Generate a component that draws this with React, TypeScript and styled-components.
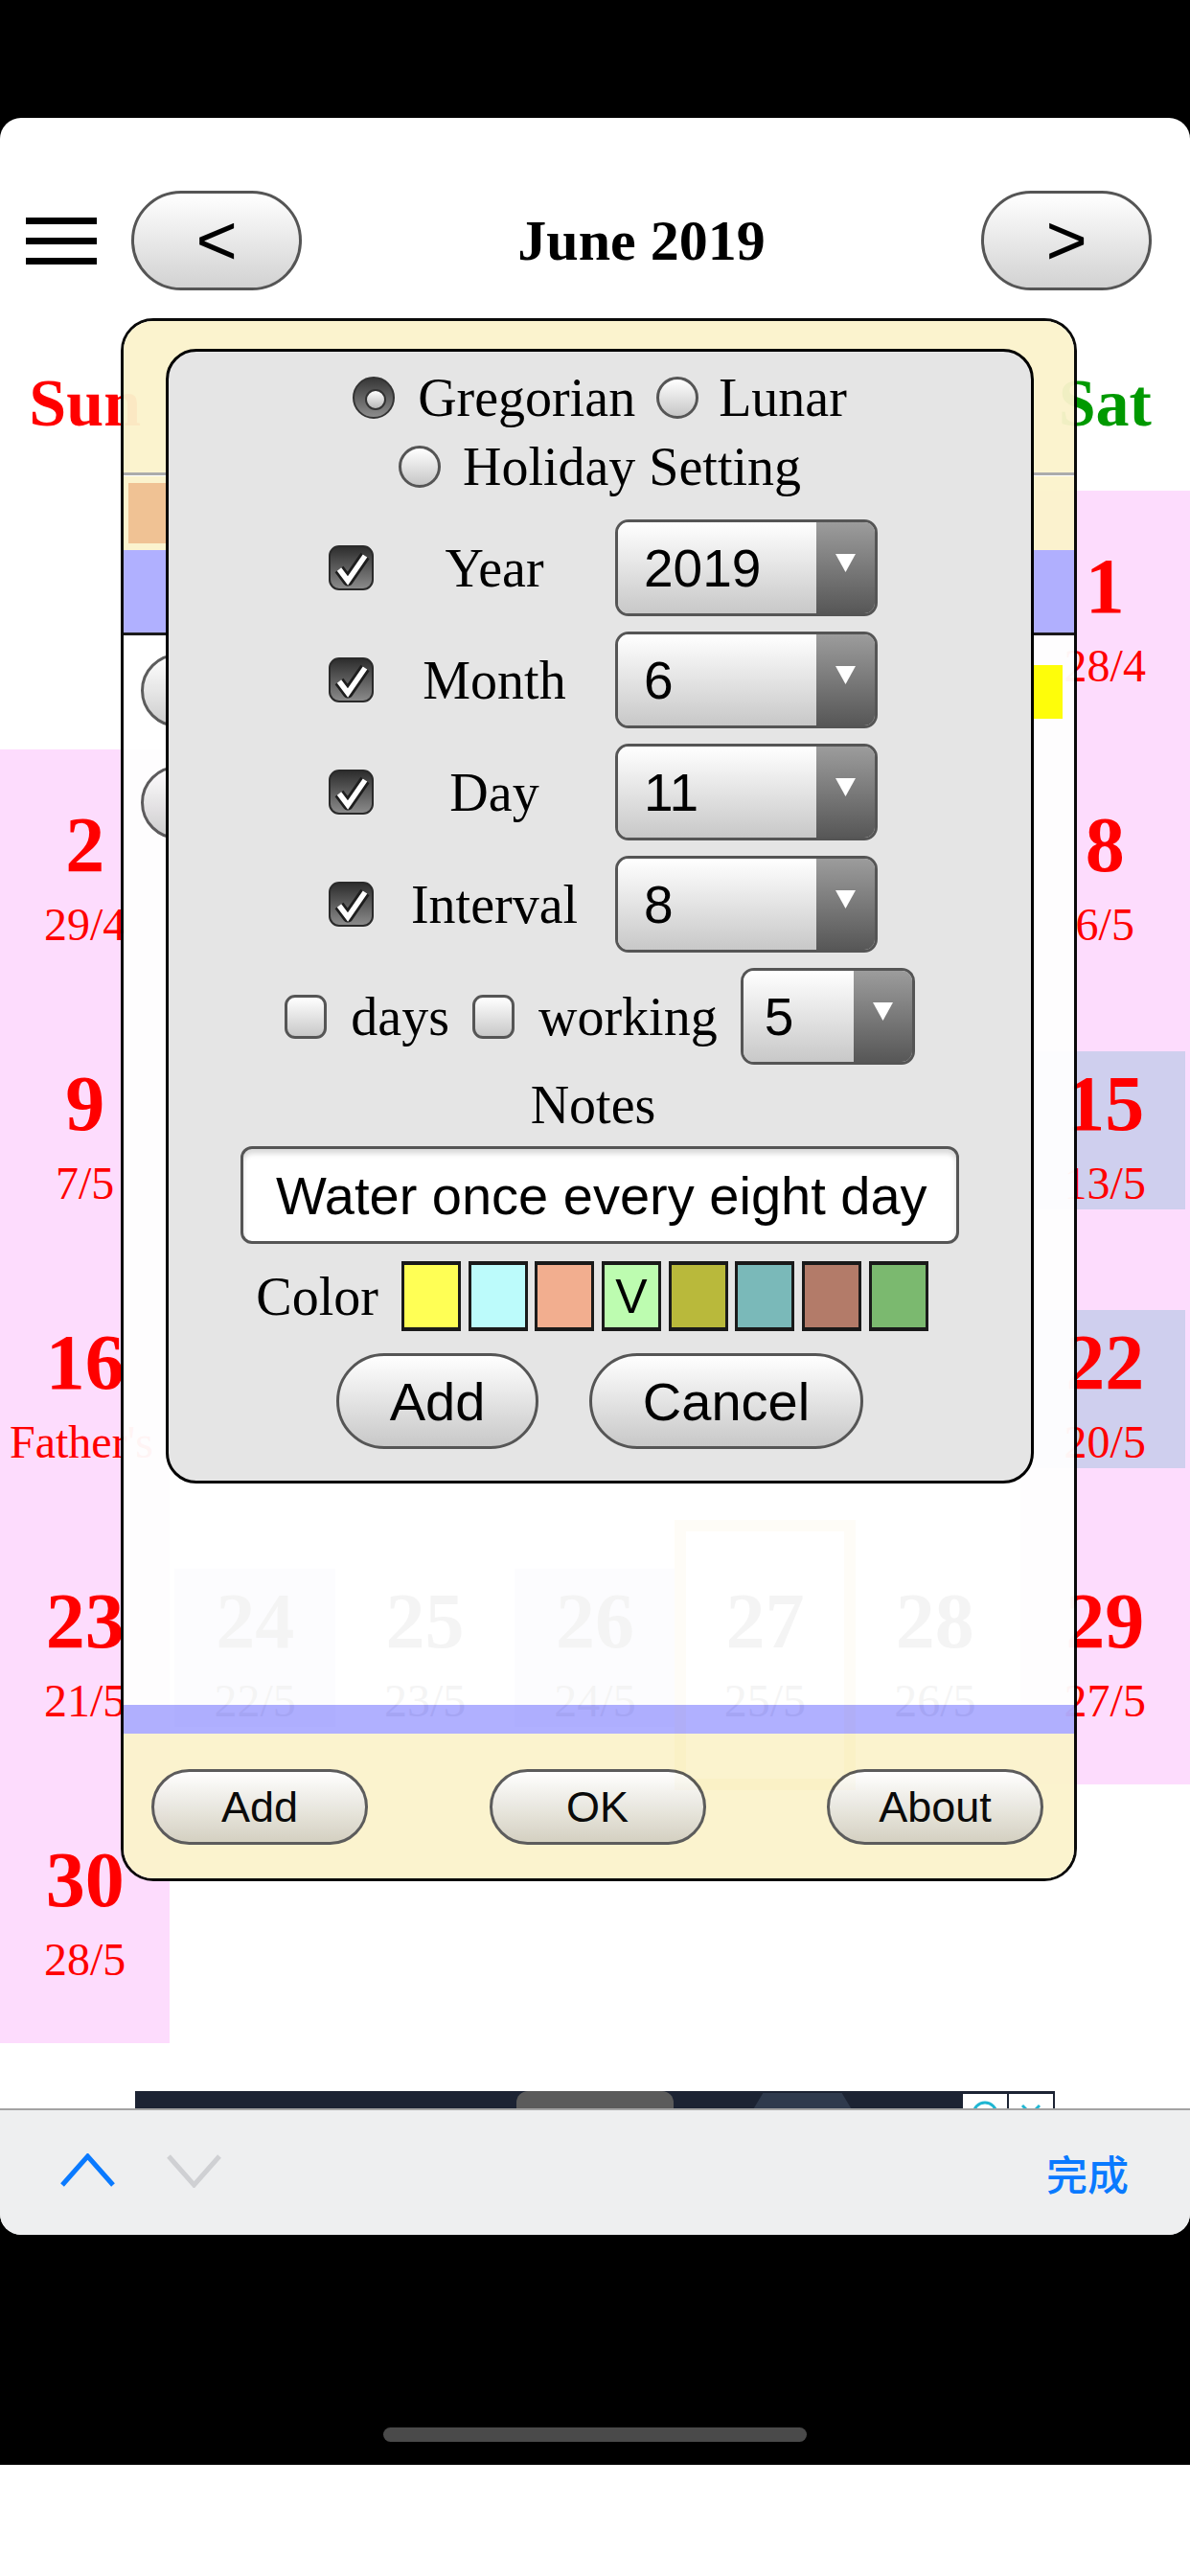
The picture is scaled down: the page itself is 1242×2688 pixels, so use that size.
import React from "react";
import styled, { createGlobalStyle } from "styled-components";

const serif = `"Liberation Serif", "Times New Roman", serif`;
const sans = `"Liberation Sans", Arial, sans-serif`;

const GlobalStyle = createGlobalStyle`
  html, body {
    margin: 0;
    padding: 0;
    background: #fff;
  }
  body {
    width: 1242px;
    height: 2688px;
    overflow: hidden;
    font-family: ${serif};
  }
  * {
    box-sizing: border-box;
  }
`;

const Frame = styled.div`
  width: 1242px;
  height: 2572px;
  background: #000;
  padding-top: 123px;
  display: flex;
  flex-direction: column;
`;

const Screen = styled.div`
  position: relative;
  height: 2209px;
  flex-shrink: 0;
  background: #fff;
  border-radius: 22px;
  overflow: hidden;
  display: flex;
  flex-direction: column;
`;

const HomeArea = styled.div`
  flex: 1;
  padding-top: 201px;
  display: flex;
  justify-content: center;
`;

const HomeIndicator = styled.div`
  width: 442px;
  height: 15px;
  border-radius: 8px;
  background: #4a4a4a;
`;

const Header = styled.div`
  margin-top: 76px;
  height: 104px;
  display: flex;
  align-items: center;
  padding: 0 40px 0 27px;
  flex-shrink: 0;
`;

const Hamburger = styled.div`
  width: 74px;
  display: flex;
  flex-direction: column;
  gap: 14px;
  span {
    display: block;
    height: 7px;
    background: #000;
  }
`;

const NavButton = styled.div<{ $left?: boolean }>`
  width: 178px;
  height: 104px;
  margin-left: ${p => (p.$left ? "36px" : "0")};
  border: 3px solid #555;
  border-radius: 52px;
  background: linear-gradient(#ffffff, #d2d2d2);
  display: flex;
  align-items: center;
  justify-content: center;
  font-family: ${sans};
  font-size: 74px;
  line-height: 1;
  color: #000;
`;

const Title = styled.div`
  flex: 1;
  text-align: center;
  font-family: ${serif};
  font-weight: bold;
  font-size: 60px;
`;

const WeekRow = styled.div`
  margin-top: 78px;
  height: 80px;
  display: grid;
  grid-template-columns: repeat(7, 1fr);
  flex-shrink: 0;
`;

const WeekName = styled.div<{ $color: string }>`
  text-align: center;
  font-family: ${serif};
  font-weight: bold;
  font-size: 70px;
  line-height: 80px;
  color: ${p => p.$color};
`;

const Calendar = styled.div`
  margin-top: 51px;
  display: grid;
  grid-template-columns: repeat(7, 1fr);
  grid-auto-rows: 270px;
  flex-shrink: 0;
`;

const DayCell = styled.div<{ $weekend: boolean; $today?: boolean }>`
  min-width: 0;
  padding-top: 45px;
  background: ${p => (p.$weekend ? "#fddcfd" : "transparent")};
  ${p => (p.$today ? "outline: 12px solid #f5cf50; outline-offset: -6px;" : "")}
`;

const DayBox = styled.div<{ $marked?: boolean; $color: string }>`
  height: 165px;
  margin: 0 5px;
  padding: 14px 5px 0;
  background: ${p => (p.$marked ? "#cfcfee" : "transparent")};
  text-align: center;
  white-space: nowrap;
  color: ${p => p.$color};
  font-family: ${serif};
`;

const DayNum = styled.div`
  font-weight: bold;
  font-size: 82px;
  line-height: 82px;
`;

const Lunar = styled.div`
  margin-top: 18px;
  font-size: 48px;
  line-height: 48px;
`;

const AdBanner = styled.div`
  position: relative;
  margin: 50px 141px 0;
  height: 150px;
  background: #1c2333;
  flex-shrink: 0;
`;

const AdTab = styled.div`
  position: absolute;
  left: 398px;
  top: 0;
  width: 164px;
  height: 80px;
  border-radius: 12px;
  background: #5b5b5b;
`;

const AdHex = styled.div`
  position: absolute;
  left: 623px;
  top: 2px;
  width: 147px;
  height: 90px;
  background: #2f3a4d;
  clip-path: polygon(22% 0, 78% 0, 100% 60%, 78% 100%, 22% 100%, 0 60%);
`;

const AdChoices = styled.div`
  position: absolute;
  right: 2px;
  top: 3px;
  display: flex;
  gap: 2px;
`;

const AdIcon = styled.div`
  width: 46px;
  height: 40px;
  background: #fff;
  display: flex;
  justify-content: center;
  padding-top: 6px;
`;

const AccessoryBar = styled.div`
  position: absolute;
  left: 0;
  right: 0;
  bottom: 0;
  height: 132px;
  border-top: 2px solid #a3a3a3;
  background: #eeeff0;
  display: flex;
  align-items: center;
  padding: 0 64px 0 62px;
`;

const Chevron = styled.svg<{ $gap?: boolean }>`
  margin-left: ${p => (p.$gap ? "52px" : "0")};
  margin-top: -4px;
`;

const Done = styled.div`
  margin-left: auto;
  font-family: "Noto Sans CJK SC", sans-serif;
  font-size: 43px;
  font-weight: 500;
  color: #0a7aff;
`;

const WhiteStrip = styled.div`
  height: 116px;
  background: #fff;
`;

/* dialog behind the settings panel */
const Dialog = styled.div`
  position: absolute;
  left: 126px;
  top: 209px;
  width: 998px;
  height: 1631px;
  border: 3px solid #000;
  border-radius: 34px;
  overflow: hidden;
  opacity: 0.955;
  display: flex;
  flex-direction: column;
`;

const DialogHead = styled.div`
  height: 161px;
  background: #fbf3cc;
  border-bottom: 3px solid #a8a8a8;
`;

const FilterRow = styled.div`
  height: 78px;
  background: #fbf3cc;
  border-top: 1px solid #fff;
  padding: 7px 0 0 5px;
`;

const OrangeChip = styled.div`
  width: 120px;
  height: 63px;
  background: #f0c090;
`;

const BlueStrip = styled.div<{ $h: number; $line?: boolean }>`
  height: ${p => p.$h}px;
  background: #adadff;
  ${p => (p.$line ? "border-bottom: 3px solid #111;" : "")}
`;

const DialogBody = styled.div`
  flex: 1;
  background: #fff;
  padding-top: 19px;
`;

const EventRow = styled.div`
  height: 117px;
  display: flex;
  align-items: flex-start;
  padding: 0 12px 0 18px;
`;

const EventButton = styled.div`
  width: 220px;
  height: 77px;
  border: 3px solid #555;
  border-radius: 40px;
  background: linear-gradient(#ffffff, #cccccc);
`;

const EventColor = styled.div<{ $color: string }>`
  margin-left: auto;
  margin-top: 12px;
  width: 70px;
  height: 56px;
  background: ${p => p.$color};
`;

const DialogFooter = styled.div`
  height: 151px;
  background: #fbf3cc;
  padding: 37px 32px 0 29px;
  display: flex;
  justify-content: space-between;
  align-items: flex-start;
`;

const FooterButton = styled.div`
  width: 226px;
  height: 79px;
  border: 3px solid #555;
  border-radius: 40px;
  background: linear-gradient(#ffffff, #d3cfbf);
  display: flex;
  align-items: center;
  justify-content: center;
  font-family: ${sans};
  font-size: 45px;
  color: #000;
`;

/* settings panel */
const Panel = styled.div`
  position: absolute;
  left: 173px;
  top: 241px;
  width: 906px;
  height: 1184px;
  border: 3px solid #000;
  border-radius: 32px;
  background: #e5e5e5;
  padding-top: 12px;
  display: flex;
  flex-direction: column;
  align-items: center;
  font-family: ${serif};
  color: #000;
`;

const RadioRow = styled.div`
  height: 72px;
  display: flex;
  align-items: center;
`;

const Label = styled.span<{ $gap?: number }>`
  font-family: ${serif};
  font-size: 56px;
  line-height: 72px;
  margin-left: ${p => p.$gap ?? 0}px;
  white-space: nowrap;
`;

const Radio = styled.span<{ $checked?: boolean; $gap?: number }>`
  position: relative;
  width: 44px;
  height: 44px;
  border-radius: 50%;
  flex-shrink: 0;
  margin-left: ${p => p.$gap ?? 0}px;
  border: ${p => (p.$checked ? "2px solid #333" : "3px solid #555")};
  background: ${p =>
    p.$checked ? "linear-gradient(#383838, #8c8c8c)" : "linear-gradient(#ffffff, #c6c6c6)"};
  &::after {
    content: "";
    display: ${p => (p.$checked ? "block" : "none")};
    position: absolute;
    left: 11px;
    top: 11px;
    width: 18px;
    height: 18px;
    border-radius: 50%;
    border: 2px solid #333;
    background: linear-gradient(#ffffff, #b8b8b8);
  }
`;

const Fields = styled.div`
  margin-top: 11px;
  margin-left: 7px;
  display: grid;
  grid-template-columns: 47px 252px 274px;
  grid-auto-rows: 117px;
  align-items: center;
`;

const FieldLabel = styled.div`
  text-align: center;
  font-size: 56px;
  line-height: 72px;
`;

const Box = styled.span<{ $checked?: boolean; $gap?: number }>`
  width: ${p => (p.$checked ? 47 : 44)}px;
  height: ${p => (p.$checked ? 47 : 46)}px;
  flex-shrink: 0;
  margin-left: ${p => p.$gap ?? 0}px;
  border-radius: 11px;
  border: ${p => (p.$checked ? "2px solid #2a2a2a" : "3px solid #555")};
  background: ${p =>
    p.$checked ? "linear-gradient(#2e2e2e, #8a8a8a)" : "linear-gradient(#ffffff, #c8c8c8)"};
  display: flex;
  align-items: center;
  justify-content: center;
`;

const SelectBox = styled.div<{ $w: number; $gap?: number }>`
  width: ${p => p.$w}px;
  height: 101px;
  margin-left: ${p => p.$gap ?? 0}px;
  border: 3px solid #555;
  border-radius: 14px;
  overflow: hidden;
  display: flex;
  flex-shrink: 0;
`;

const SelectValue = styled.div<{ $pad: number }>`
  flex: 1;
  background: linear-gradient(#ffffff, #c8c8c8);
  padding-left: ${p => p.$pad}px;
  display: flex;
  align-items: center;
  font-family: ${sans};
  font-size: 55px;
  color: #000;
`;

const SelectArrow = styled.div`
  width: 61px;
  background: linear-gradient(#9c9c9c, #575757);
  display: flex;
  justify-content: center;
  padding-top: 33px;
`;

const DaysRow = styled.div`
  height: 117px;
  display: flex;
  align-items: center;
`;

const NotesLabel = styled.div`
  font-size: 56px;
  line-height: 68px;
  margin-left: -14px;
`;

const NotesInput = styled.input`
  margin-top: 9px;
  width: 750px;
  height: 102px;
  border: 3px solid #555;
  border-radius: 12px;
  padding: 0 30px 0 34px;
  background: #fff;
  box-shadow: inset 0 5px 5px rgba(0, 0, 0, 0.14);
  font-family: ${sans};
  font-size: 56px;
  color: #000;
  outline: none;
`;

const ColorRow = styled.div`
  margin-top: 18px;
  margin-left: -16px;
  height: 73px;
  display: flex;
  align-items: center;
`;

const Swatch = styled.div<{ $color: string }>`
  width: 62px;
  height: 73px;
  margin-left: 7.7px;
  border: 3px solid #1a1a1a;
  border-top-width: 4px;
  border-bottom-width: 4px;
  background: ${p => p.$color};
  display: flex;
  align-items: center;
  justify-content: center;
  font-family: ${sans};
  font-size: 50px;
  color: #000;
  &:first-of-type {
    margin-left: 24px;
  }
`;

const ButtonRow = styled.div`
  margin-top: 23px;
  display: flex;
  gap: 53px;
`;

const PanelButton = styled.div<{ $w: number }>`
  width: ${p => p.$w}px;
  height: 100px;
  border: 3px solid #555;
  border-radius: 50px;
  background: linear-gradient(#ffffff, #c8c8c8);
  display: flex;
  align-items: center;
  justify-content: center;
  font-family: ${sans};
  font-size: 56px;
  color: #000;
`;

const CheckMark = () => (
  <svg width="40" height="40" viewBox="0 0 40 40">
    <path d="M7 21 L16 33 L34 7" fill="none" stroke="#1e1e1e" strokeWidth="11" strokeLinejoin="round" />
    <path d="M7 21 L16 33 L34 7" fill="none" stroke="#fff" strokeWidth="5.5" strokeLinejoin="miter" />
  </svg>
);

const Arrow = () => (
  <svg width="21" height="19" viewBox="0 0 21 19">
    <polygon points="0,0 21,0 10.5,19" fill="#fff" />
  </svg>
);

const Select = ({ value, width, pad, gap }: { value: string; width: number; pad: number; gap?: number }) => (
  <SelectBox $w={width} $gap={gap}>
    <SelectValue $pad={pad}>{value}</SelectValue>
    <SelectArrow>
      <Arrow />
    </SelectArrow>
  </SelectBox>
);

const lunar = (d: number) => {
  if (d === 1) return "28/4";
  if (d === 2) return "29/4";
  if (d === 16) return "Father's Day";
  return `${d - 2}/5`;
};

const marked = [15, 22, 24, 26];
const swatches = ["#ffff55", "#bcfbfb", "#f2ae8f", "#bdfcb0", "#b9b93b", "#7ab9b9", "#b37b69", "#7bb96f"];
const weekNames = ["Sun", "Mon", "Tue", "Wed", "Thu", "Fri", "Sat"];

export default function App() {
  const cells = Array.from({ length: 42 }, (_, i) => {
    const d = i - 5;
    return d >= 1 && d <= 30 ? d : null;
  });

  return (
    <>
      <GlobalStyle />
      <Frame>
        <Screen>
          <Header>
            <Hamburger>
              <span />
              <span />
              <span />
            </Hamburger>
            <NavButton $left>&lt;</NavButton>
            <Title>June 2019</Title>
            <NavButton>&gt;</NavButton>
          </Header>

          <WeekRow>
            {weekNames.map((n, i) => (
              <WeekName key={n} $color={i === 0 ? "#ff0000" : i === 6 ? "#009900" : "#000"}>
                {n}
              </WeekName>
            ))}
          </WeekRow>

          <Calendar>
            {cells.map((d, i) => {
              const col = i % 7;
              const weekend = col === 0 || col === 6;
              return (
                <DayCell key={i} $weekend={!!d && weekend} $today={d === 27}>
                  {d && (
                    <DayBox $marked={marked.includes(d)} $color={weekend ? "#ff0000" : "#000"}>
                      <DayNum>{d}</DayNum>
                      <Lunar>{lunar(d)}</Lunar>
                    </DayBox>
                  )}
                </DayCell>
              );
            })}
          </Calendar>

          <AdBanner>
            <AdTab />
            <AdHex />
            <AdChoices>
              <AdIcon>
                <svg width="30" height="30" viewBox="0 0 30 30">
                  <circle cx="15" cy="15" r="12" fill="none" stroke="#1fb6d2" strokeWidth="3" />
                </svg>
              </AdIcon>
              <AdIcon>
                <svg width="30" height="30" viewBox="0 0 30 30">
                  <path d="M6 6 L24 24 M24 6 L6 24" stroke="#1fb6d2" strokeWidth="3" />
                </svg>
              </AdIcon>
            </AdChoices>
          </AdBanner>

          <Dialog>
            <DialogHead />
            <FilterRow>
              <OrangeChip />
            </FilterRow>
            <BlueStrip $h={89} $line />
            <DialogBody>
              <EventRow>
                <EventButton />
                <EventColor $color="#ffff00" />
              </EventRow>
              <EventRow>
                <EventButton />
              </EventRow>
            </DialogBody>
            <BlueStrip $h={30} />
            <DialogFooter>
              <FooterButton>Add</FooterButton>
              <FooterButton>OK</FooterButton>
              <FooterButton>About</FooterButton>
            </DialogFooter>
          </Dialog>

          <Panel>
            <RadioRow>
              <Radio $checked />
              <Label $gap={24}>Gregorian</Label>
              <Radio $gap={22} />
              <Label $gap={21}>Lunar</Label>
            </RadioRow>
            <RadioRow>
              <Radio />
              <Label $gap={23}>Holiday Setting</Label>
            </RadioRow>

            <Fields>
              <Box $checked>
                <CheckMark />
              </Box>
              <FieldLabel>Year</FieldLabel>
              <Select value="2019" width={274} pad={27} />

              <Box $checked>
                <CheckMark />
              </Box>
              <FieldLabel>Month</FieldLabel>
              <Select value="6" width={274} pad={27} />

              <Box $checked>
                <CheckMark />
              </Box>
              <FieldLabel>Day</FieldLabel>
              <Select value="11" width={274} pad={27} />

              <Box $checked>
                <CheckMark />
              </Box>
              <FieldLabel>Interval</FieldLabel>
              <Select value="8" width={274} pad={27} />
            </Fields>

            <DaysRow>
              <Box />
              <Label $gap={25}>days</Label>
              <Box $gap={24} />
              <Label $gap={25}>working</Label>
              <Select value="5" width={182} pad={22} gap={24} />
            </DaysRow>

            <NotesLabel>Notes</NotesLabel>
            <NotesInput readOnly value="Water once every eight days" />

            <ColorRow>
              <Label>Color</Label>
              {swatches.map((c, i) => (
                <Swatch key={c} $color={c}>
                  {i === 3 ? "V" : ""}
                </Swatch>
              ))}
            </ColorRow>

            <ButtonRow>
              <PanelButton $w={211}>Add</PanelButton>
              <PanelButton $w={286}>Cancel</PanelButton>
            </ButtonRow>
          </Panel>

          <AccessoryBar>
            <Chevron width="59" height="36" viewBox="0 0 59 36">
              <polyline points="3,33 29.5,3 56,33" fill="none" stroke="#0a7aff" strokeWidth="5" />
            </Chevron>
            <Chevron $gap width="59" height="36" viewBox="0 0 59 36">
              <polyline points="3,3 29.5,33 56,3" fill="none" stroke="#cfd0d3" strokeWidth="5" />
            </Chevron>
            <Done>完成</Done>
          </AccessoryBar>
        </Screen>
        <HomeArea>
          <HomeIndicator />
        </HomeArea>
      </Frame>
      <WhiteStrip />
    </>
  );
}
